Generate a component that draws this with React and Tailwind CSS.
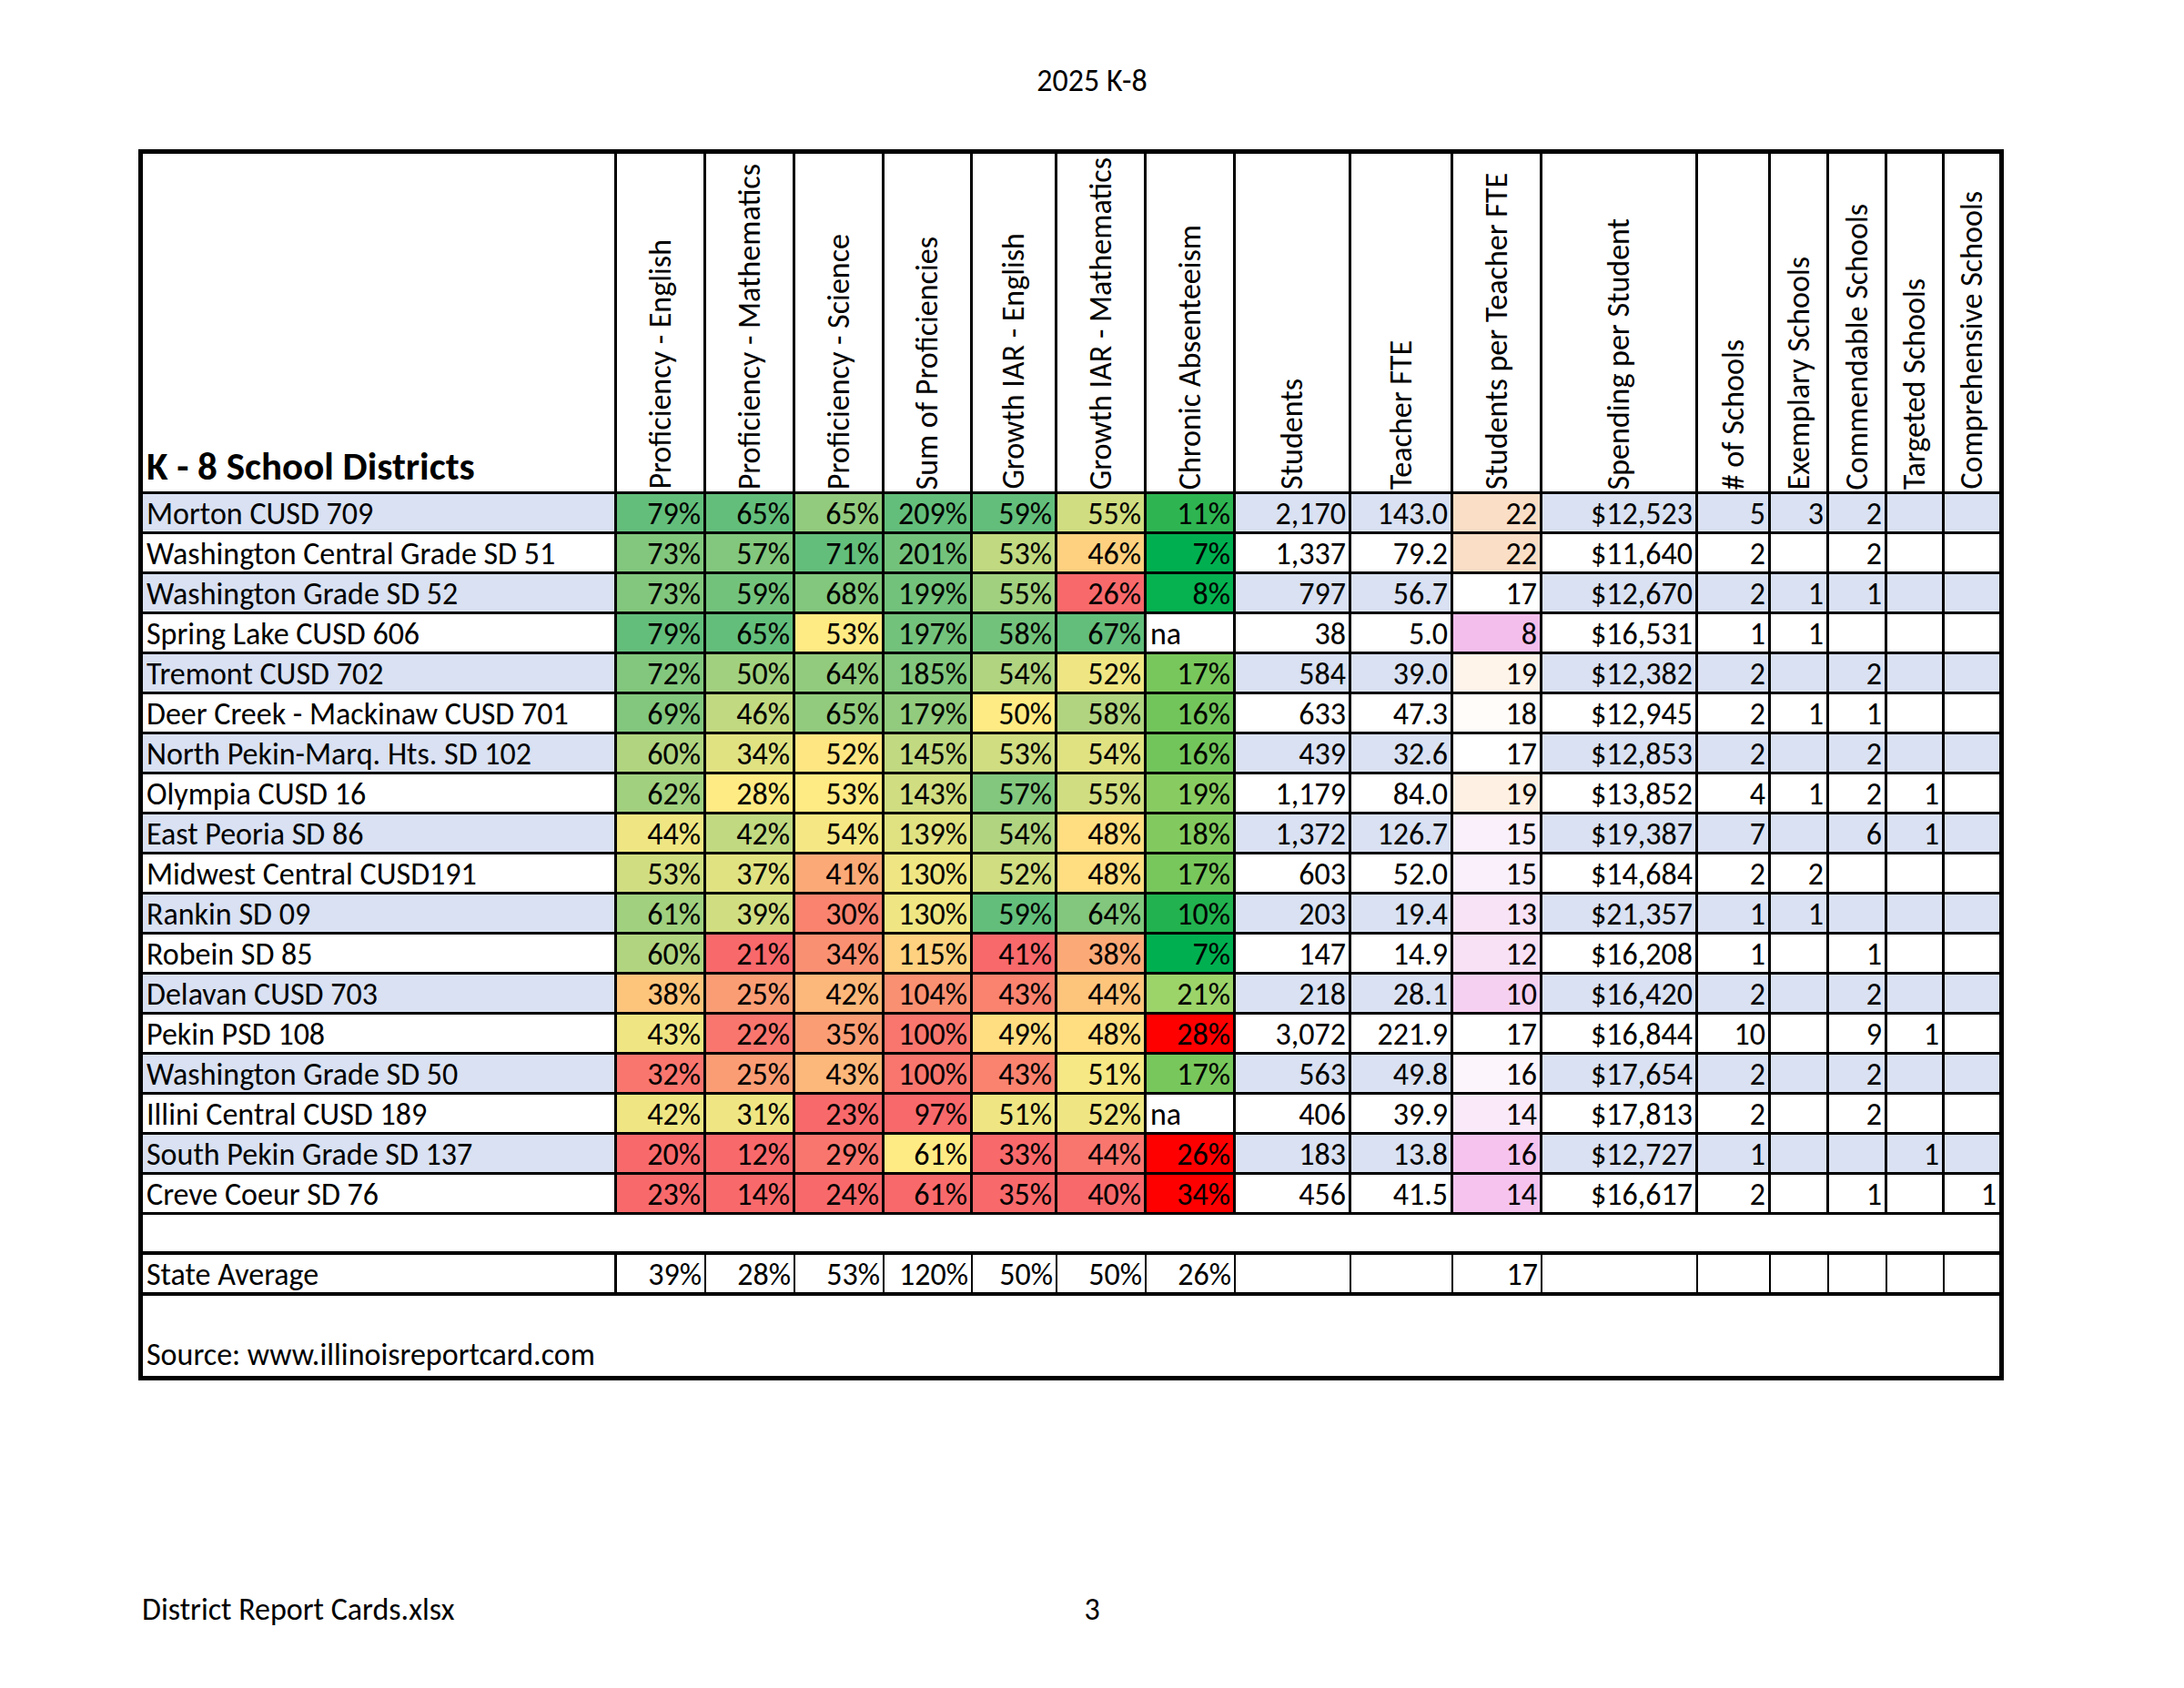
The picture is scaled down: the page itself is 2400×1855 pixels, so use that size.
import React from 'react';

const R0='bg-[#f8696b]', R1='bg-[#f9766e]', R2='bg-[#f9836f]', R3='bg-[#fa9072]', R4='bg-[#fa9d75]', R5='bg-[#fbaa77]', R6='bg-[#fcb77a]', R7='bg-[#fdc47c]', R8='bg-[#fdd17f]', R9='bg-[#fede81]', Y='bg-[#ffeb84]';
const G1='bg-[#efe683]', G2='bg-[#e0e282]', G3='bg-[#d0dd81]', G4='bg-[#c1d980]', G5='bg-[#b1d480]', G6='bg-[#a1d07f]', G7='bg-[#92cb7e]', G8='bg-[#82c77d]', G9='bg-[#73c27c]', GG='bg-[#63be7b]';
const A7='bg-[#00b050]', A8='bg-[#06b150]', A10='bg-[#22b24f]', A11='bg-[#2eb552]', A16='bg-[#72c55b]', A17='bg-[#78c75c]', A18='bg-[#82ca5f]', A19='bg-[#88cc61]', A21='bg-[#9cd46a]', AR='bg-[#ff0000]', W='bg-white';
const P22='bg-[#fadec6]', P19a='bg-[#fef4ea]', P18='bg-[#fffcf9]', P19b='bg-[#fef1e3]', P15='bg-[#faf0fb]', P13='bg-[#f8e3f6]', P12='bg-[#f8e0f5]', P10='bg-[#f6d0f0]', P16a='bg-[#fdf5fc]', P14a='bg-[#fae9f8]', P16b='bg-[#f5c3ee]', P8='bg-[#f4beec]';
const BLUE='bg-[#d9e1f2]';

const rows = [
  ['Morton CUSD 709', ['79%','65%','65%','209%','59%','55%','11%'], [GG,GG,G7,GG,GG,G3,A11], '2,170','143.0','22',P22,'$12,523','5','3','2','',''],
  ['Washington Central Grade SD 51', ['73%','57%','71%','201%','53%','46%','7%'], [G8,G8,GG,G9,G4,R8,A7], '1,337','79.2','22',P22,'$11,640','2','','2','',''],
  ['Washington Grade SD 52', ['73%','59%','68%','199%','55%','26%','8%'], [G8,G9,G8,G9,G6,R0,A8], '797','56.7','17',W,'$12,670','2','1','1','',''],
  ['Spring Lake CUSD 606', ['79%','65%','53%','197%','58%','67%','na'], [GG,GG,Y,G9,G9,GG,W], '38','5.0','8',P8,'$16,531','1','1','','',''],
  ['Tremont CUSD 702', ['72%','50%','64%','185%','54%','52%','17%'], [G8,G6,G7,G8,G5,G1,A17], '584','39.0','19',P19a,'$12,382','2','','2','',''],
  ['Deer Creek - Mackinaw CUSD 701', ['69%','46%','65%','179%','50%','58%','16%'], [G8,G4,G7,G7,Y,G5,A16], '633','47.3','18',P18,'$12,945','2','1','1','',''],
  ['North Pekin-Marq. Hts. SD 102', ['60%','34%','52%','145%','53%','54%','16%'], [G5,G2,'bg-[#fee683]',G4,G3,G2,A16], '439','32.6','17',W,'$12,853','2','','2','',''],
  ['Olympia CUSD 16', ['62%','28%','53%','143%','57%','55%','19%'], [G6,Y,Y,G3,G8,G3,A19], '1,179','84.0','19',P19b,'$13,852','4','1','2','1',''],
  ['East Peoria SD 86', ['44%','42%','54%','139%','54%','48%','18%'], [G1,G4,'bg-[#f5e884]',G2,G5,R9,A18], '1,372','126.7','15',P15,'$19,387','7','','6','1',''],
  ['Midwest Central CUSD191', ['53%','37%','41%','130%','52%','48%','17%'], [G3,G2,R5,G1,G3,R9,A17], '603','52.0','15',P15,'$14,684','2','2','','',''],
  ['Rankin SD 09', ['61%','39%','30%','130%','59%','64%','10%'], [G6,G3,R2,G1,GG,G8,A10], '203','19.4','13',P13,'$21,357','1','1','','',''],
  ['Robein SD 85', ['60%','21%','34%','115%','41%','38%','7%'], [G5,R0,R3,R8,R0,R5,A7], '147','14.9','12',P12,'$16,208','1','','1','',''],
  ['Delavan CUSD 703', ['38%','25%','42%','104%','43%','44%','21%'], [R7,R4,R6,R3,R2,R7,A21], '218','28.1','10',P10,'$16,420','2','','2','',''],
  ['Pekin PSD 108', ['43%','22%','35%','100%','49%','48%','28%'], [G1,R1,R4,R1,R9,R9,AR], '3,072','221.9','17',W,'$16,844','10','','9','1',''],
  ['Washington Grade SD 50', ['32%','25%','43%','100%','43%','51%','17%'], [R1,R4,R6,R1,R2,'bg-[#f6e884]',A17], '563','49.8','16',P16a,'$17,654','2','','2','',''],
  ['Illini Central CUSD 189', ['42%','31%','23%','97%','51%','52%','na'], [G1,G1,R0,R0,G1,G1,W], '406','39.9','14',P14a,'$17,813','2','','2','',''],
  ['South Pekin Grade SD 137', ['20%','12%','29%','61%','33%','44%','26%'], [R0,R0,R1,Y,R0,R1,AR], '183','13.8','16',P16b,'$12,727','1','','','1',''],
  ['Creve Coeur SD 76', ['23%','14%','24%','61%','35%','40%','34%'], [R0,R0,R0,R0,R0,R0,AR], '456','41.5','14',P16b,'$16,617','2','','1','','1'],
];

const headers = ['Proficiency - English','Proficiency - Mathematics','Proficiency - Science','Sum of Proficiencies','Growth IAR - English','Growth IAR - Mathematics','Chronic Absenteeism','Students','Teacher FTE','Students per Teacher FTE','Spending per Student','# of Schools','Exemplary Schools','Commendable Schools','Targeted Schools','Comprehensive Schools'];

const stateAvg = ['39%','28%','53%','120%','50%','50%','26%','','','17','','','','','',''];

function Cell({ children, bg = W, last = false, left = false }) {
  return (
    <div className={`h-[44px] border-b-[3px] border-black ${last ? '' : 'border-r-[3px]'} ${bg} flex items-center ${left ? 'justify-start pl-[4px]' : 'justify-end pr-[3px]'} whitespace-nowrap`}>
      <span className="pt-[3px]">{children}</span>
    </div>
  );
}

export default function App() {
  return (
    <div className="w-[2400px] h-[1855px] bg-white text-black flex flex-col [font-family:Carlito,Lato,sans-serif] text-[34px] leading-none">
      <div className="h-[164px] flex justify-center pt-[72px]">
        <span>2025 K-8</span>
      </div>
      <div className="ml-[152px] w-[2050px] border-[5px] border-black">
        <div className="grid grid-cols-[521px_98px_98px_98px_97px_93px_98px_98px_127px_112px_98px_171px_80px_64px_64px_63px_60px]">
          <div className="h-[374px] border-b-[3px] border-r-[3px] border-black flex items-end pl-[4px] pb-[6px]">
            <span className="font-bold text-[43px]">K - 8 School Districts</span>
          </div>
          {headers.map((h, i) => (
            <div key={h} className={`h-[374px] border-b-[3px] border-black ${i === headers.length - 1 ? '' : 'border-r-[3px]'} flex items-end justify-center pb-[2px]`}>
              <span className="[writing-mode:vertical-rl] rotate-180 whitespace-nowrap text-[34px]">{h}</span>
            </div>
          ))}
          {rows.map((r, ri) => {
            const odd = ri % 2 === 0;
            const rb = odd ? BLUE : W;
            const [name, pcts, pcols, students, fte, spt, sptc, spend, sch, ex, com, tg, cp] = r;
            return (
              <React.Fragment key={name}>
                <Cell bg={rb} left>{name}</Cell>
                {pcts.map((p, i) => (
                  <Cell key={i} bg={pcols[i]} left={p === 'na'}>{p}</Cell>
                ))}
                <Cell bg={rb}>{students}</Cell>
                <Cell bg={rb}>{fte}</Cell>
                <Cell bg={sptc}>{spt}</Cell>
                <Cell bg={rb}>{spend}</Cell>
                <Cell bg={rb}>{sch}</Cell>
                <Cell bg={rb}>{ex}</Cell>
                <Cell bg={rb}>{com}</Cell>
                <Cell bg={rb}>{tg}</Cell>
                <Cell bg={rb} last>{cp}</Cell>
              </React.Fragment>
            );
          })}
          <div className="col-span-17 h-[44px] border-b-[4px] border-black"></div>
          <div className="h-[45px] border-b-[4px] border-r-[3px] border-black flex items-center pl-[4px]">
            <span className="pt-[3px]">State Average</span>
          </div>
          {stateAvg.map((v, i) => (
            <div key={i} className={`h-[45px] border-b-[4px] border-black ${i === stateAvg.length - 1 ? '' : 'border-r-2'} flex items-center justify-end pr-[3px]`}>
              <span className="pt-[3px]">{v}</span>
            </div>
          ))}
          <div className="col-span-17 h-[88px] flex items-end pl-[4px] pb-[6px]">
            <span>Source: www.illinoisreportcard.com</span>
          </div>
        </div>
      </div>
      <div className="mt-[235px] grid grid-cols-[1fr_auto_1fr]">
        <div className="pl-[156px]">District Report Cards.xlsx</div>
        <div>3</div>
        <div></div>
      </div>
    </div>
  );
}
